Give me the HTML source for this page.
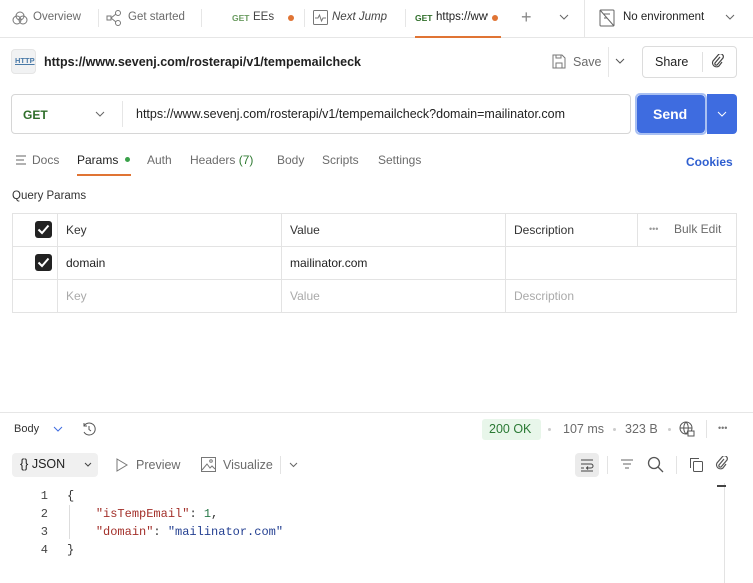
<!DOCTYPE html>
<html><head><meta charset="utf-8"><style>
*{margin:0;padding:0;box-sizing:border-box}
body{width:753px;height:583px;background:#fff;font-family:"Liberation Sans",sans-serif;font-size:12px;color:#212121;position:relative;overflow:hidden}
.a{position:absolute;white-space:nowrap}
.g{color:#6b6b6b}
.mono{font-family:"Liberation Mono",monospace;font-size:12px}
svg{position:absolute}
</style></head><body>
<!-- tab bar -->
<div class="a" style="left:0;top:37px;width:753px;height:1px;background:#e6e6e6"></div>
<svg style="left:12px;top:11px" width="16" height="14" viewBox="0 0 16 14" fill="none" stroke="#777"><circle cx="5" cy="9" r="4"/><circle cx="11" cy="9" r="4"/><circle cx="8" cy="5" r="4"/></svg>
<div class="a g" style="left:33px;top:11px;font-size:11.5px">Overview</div>
<div class="a" style="left:98px;top:9px;width:1px;height:18px;background:#e6e6e6"></div>
<svg style="left:106px;top:10px" width="16" height="16" viewBox="0 0 16 16" fill="none" stroke="#777"><rect x="1" y="6" width="4" height="4"/><circle cx="12" cy="3" r="2.5"/><circle cx="12" cy="13" r="2.5"/><path d="M5 8L10 4M5 8L10 12"/></svg>
<div class="a g" style="left:128px;top:11px;font-size:11.5px">Get started</div>
<div class="a" style="left:201px;top:9px;width:1px;height:18px;background:#e6e6e6"></div>
<div class="a" style="left:232px;top:13px;font-size:8.5px;color:#6a9b60;font-weight:bold">GET</div>
<div class="a" style="left:253px;top:11px;font-size:11.5px;color:#444">EEs</div>
<div class="a" style="left:288px;top:15px;width:6px;height:6px;border-radius:3px;background:#e07434"></div>
<div class="a" style="left:304px;top:9px;width:1px;height:18px;background:#e6e6e6"></div>
<svg style="left:313px;top:10px" width="15" height="15" viewBox="0 0 15 15" fill="none" stroke="#777"><rect x="0.5" y="0.5" width="14" height="14" rx="1"/><path d="M2 8h3l1.5-3 2 6 1.5-3h3"/></svg>
<div class="a" style="left:332px;top:11px;font-size:11.5px;font-style:italic;color:#444">Next Jump</div>
<div class="a" style="left:405px;top:9px;width:1px;height:18px;background:#e6e6e6"></div>
<div class="a" style="left:415px;top:13px;font-size:8.5px;color:#2f6e2a;font-weight:bold">GET</div>
<div class="a" style="left:436px;top:11px;font-size:11.5px;color:#222;width:52px;overflow:hidden">https://www</div>
<div class="a" style="left:492px;top:15px;width:6px;height:6px;border-radius:3px;background:#e07434"></div>
<div class="a" style="left:415px;top:36px;width:86px;height:2px;background:#e07434"></div>
<div class="a" style="left:521px;top:7px;font-size:18px;color:#888;font-weight:300">+</div>
<svg style="left:559px;top:14px" width="10" height="7" viewBox="0 0 10 7" fill="none" stroke="#666"><path d="M1 1l4 4 4-4"/></svg>
<div class="a" style="left:584px;top:0;width:1px;height:37px;background:#e6e6e6"></div>
<svg style="left:599px;top:9px" width="16" height="18" viewBox="0 0 16 18" fill="none" stroke="#666"><rect x="1" y="1" width="14" height="16" rx="1"/><path d="M1 1l14 16M5 5h6M5 9h3"/></svg>
<div class="a" style="left:623px;top:11px;font-size:11.5px;color:#222">No environment</div>
<svg style="left:725px;top:14px" width="10" height="7" viewBox="0 0 10 7" fill="none" stroke="#666"><path d="M1 1l4 4 4-4"/></svg>

<!-- title row -->
<div class="a" style="left:11px;top:49px;width:25px;height:25px;border-radius:4px;background:#f1f2f3;border:1px solid #e5e5e5"></div>
<div class="a" style="left:15px;top:56px;font-size:7.5px;color:#4a7aa8;font-weight:bold;text-decoration:underline">HTTP</div>
<div class="a" style="left:44px;top:55px;font-size:12.5px;font-weight:bold;color:#212121">https://www.sevenj.com/rosterapi/v1/tempemailcheck</div>
<svg style="left:552px;top:54px" width="14" height="15" viewBox="0 0 14 15" fill="none" stroke="#777"><path d="M1 1h9l3 3v10H1z"/><rect x="4" y="9" width="6" height="5"/><path d="M4 1v3h5V1"/></svg>
<div class="a g" style="left:573px;top:55px;font-size:12.5px">Save</div>
<div class="a" style="left:608px;top:47px;width:1px;height:30px;background:#e6e6e6"></div>
<svg style="left:615px;top:58px" width="10" height="7" viewBox="0 0 10 7" fill="none" stroke="#555"><path d="M1 1l4 4 4-4"/></svg>
<div class="a" style="left:642px;top:46px;width:95px;height:32px;border:1px solid #dcdcdc;border-radius:4px"></div>
<div class="a" style="left:655px;top:55px;font-size:12.5px;color:#222">Share</div>
<div class="a" style="left:702px;top:52px;width:1px;height:20px;background:#e0e0e0"></div>
<svg style="left:711px;top:54px" width="14" height="15" viewBox="0 0 14 15" fill="none" stroke="#444" stroke-width="1.2"><path d="M9 3l-5 6a1.5 1.5 0 0 0 2 2l6-7a3 3 0 0 0-4-4l-6 7a4 4 0 0 0 6 5l3-4"/></svg>

<!-- url bar -->
<div class="a" style="left:11px;top:94px;width:620px;height:40px;border:1px solid #d6d6d6;border-radius:4px"></div>
<div class="a" style="left:23px;top:108px;font-size:12px;font-weight:bold;color:#2f6e2a">GET</div>
<svg style="left:95px;top:111px" width="10" height="7" viewBox="0 0 10 7" fill="none" stroke="#666"><path d="M1 1l4 4 4-4"/></svg>
<div class="a" style="left:122px;top:101px;width:1px;height:26px;background:#e6e6e6"></div>
<div class="a" style="left:136px;top:107px;font-size:12.5px;color:#222">https://www.sevenj.com/rosterapi/v1/tempemailcheck?domain=mailinator.com</div>
<div class="a" style="left:635px;top:93px;width:72px;height:42px;border:2px solid #a9c0f2;border-radius:5px"></div>
<div class="a" style="left:637px;top:95px;width:68px;height:38px;background:#3e6ce0;border-radius:4px"></div>
<div class="a" style="left:653px;top:106px;font-size:14px;font-weight:bold;color:#fff">Send</div>
<div class="a" style="left:707px;top:94px;width:30px;height:40px;background:#3e6ce0;border-radius:0 4px 4px 0"></div>
<svg style="left:717px;top:111px" width="10" height="7" viewBox="0 0 10 7" fill="none" stroke="#fff"><path d="M1 1l4 4 4-4"/></svg>

<!-- request tabs -->
<svg style="left:16px;top:155px" width="11" height="10" viewBox="0 0 11 10" stroke="#666"><path d="M0 1h10M0 5h8M0 9h10"/></svg>
<div class="a g" style="left:32px;top:153px;font-size:12px">Docs</div>
<div class="a" style="left:77px;top:153px;font-size:12px;color:#222">Params</div>
<div class="a" style="left:125px;top:157px;width:5px;height:5px;border-radius:3px;background:#3aa14a"></div>
<div class="a" style="left:77px;top:174px;width:54px;height:2px;background:#e07434"></div>
<div class="a g" style="left:147px;top:153px;font-size:12px">Auth</div>
<div class="a g" style="left:190px;top:153px;font-size:12px">Headers <span style="color:#2f7a32">(7)</span></div>
<div class="a g" style="left:277px;top:153px;font-size:12px">Body</div>
<div class="a g" style="left:322px;top:153px;font-size:12px">Scripts</div>
<div class="a g" style="left:378px;top:153px;font-size:12px">Settings</div>
<div class="a" style="left:686px;top:155px;font-size:12px;font-weight:bold;color:#2f5fd0">Cookies</div>

<div class="a" style="left:12px;top:190px;font-size:11.5px;color:#333">Query Params</div>

<!-- table -->
<div class="a" style="left:12px;top:213px;width:725px;height:100px;border:1px solid #e3e3e3"></div>
<div class="a" style="left:12px;top:246px;width:725px;height:1px;background:#e3e3e3"></div>
<div class="a" style="left:12px;top:279px;width:725px;height:1px;background:#e3e3e3"></div>
<div class="a" style="left:57px;top:213px;width:1px;height:100px;background:#e3e3e3"></div>
<div class="a" style="left:281px;top:213px;width:1px;height:100px;background:#e3e3e3"></div>
<div class="a" style="left:505px;top:213px;width:1px;height:100px;background:#e3e3e3"></div>
<div class="a" style="left:637px;top:213px;width:1px;height:33px;background:#e3e3e3"></div>
<div class="a" style="left:35px;top:221px;width:17px;height:17px;background:#222;border-radius:3px"></div>
<svg style="left:37px;top:224px" width="13" height="11" viewBox="0 0 13 11" fill="none" stroke="#fff" stroke-width="2"><path d="M1.5 5.5l3.5 3.5 6.5-7.5"/></svg>
<div class="a" style="left:35px;top:254px;width:17px;height:17px;background:#222;border-radius:3px"></div>
<svg style="left:37px;top:257px" width="13" height="11" viewBox="0 0 13 11" fill="none" stroke="#fff" stroke-width="2"><path d="M1.5 5.5l3.5 3.5 6.5-7.5"/></svg>
<div class="a" style="left:66px;top:223px;font-size:12px;color:#333">Key</div>
<div class="a" style="left:290px;top:223px;font-size:12px;color:#333">Value</div>
<div class="a" style="left:514px;top:223px;font-size:12px;color:#333">Description</div>
<div class="a" style="left:649px;top:224px;font-size:9px;color:#999">•••</div>
<div class="a g" style="left:674px;top:222px;font-size:12px">Bulk Edit</div>
<div class="a" style="left:66px;top:256px;font-size:12px;color:#222">domain</div>
<div class="a" style="left:290px;top:256px;font-size:12px;color:#222">mailinator.com</div>
<div class="a" style="left:66px;top:289px;font-size:12px;color:#aaa">Key</div>
<div class="a" style="left:290px;top:289px;font-size:12px;color:#aaa">Value</div>
<div class="a" style="left:514px;top:289px;font-size:12px;color:#aaa">Description</div>

<!-- response -->
<div class="a" style="left:0;top:412px;width:753px;height:1px;background:#e6e6e6"></div>
<div class="a" style="left:14px;top:423px;font-size:11px;color:#333">Body</div>
<svg style="left:53px;top:426px" width="10" height="7" viewBox="0 0 10 7" fill="none" stroke="#3e6ce0"><path d="M1 1l4 4 4-4"/></svg>
<svg style="left:81px;top:421px" width="16" height="16" viewBox="0 0 16 16" fill="none" stroke="#555"><path d="M3 5A6 6 0 1 1 3 11M3 2v3h3M8 5v3.5l2 1.5"/></svg>
<div class="a" style="left:482px;top:419px;width:59px;height:21px;background:#e8f6ea;border-radius:3px"></div>
<div class="a" style="left:489px;top:422px;font-size:12.5px;color:#2b7a35">200 OK</div>
<div class="a" style="left:548px;top:428px;width:3px;height:3px;border-radius:2px;background:#ccc"></div>
<div class="a g" style="left:563px;top:422px;font-size:12.5px">107 ms</div>
<div class="a" style="left:613px;top:428px;width:3px;height:3px;border-radius:2px;background:#ccc"></div>
<div class="a g" style="left:625px;top:422px;font-size:12.5px">323 B</div>
<div class="a" style="left:668px;top:428px;width:3px;height:3px;border-radius:2px;background:#ccc"></div>
<svg style="left:679px;top:421px" width="16" height="16" viewBox="0 0 16 16" fill="none" stroke="#555"><circle cx="7" cy="7" r="6"/><path d="M1 7h12M7 1c-3 3-3 9 0 12M7 1c3 3 3 9 0 12"/><rect x="9" y="10" width="6" height="5" fill="#fff"/></svg>
<div class="a" style="left:706px;top:420px;width:1px;height:18px;background:#e3e3e3"></div>
<div class="a" style="left:718px;top:423px;font-size:9px;color:#777">•••</div>

<div class="a" style="left:12px;top:453px;width:86px;height:24px;background:#f0f0f0;border-radius:4px"></div>
<div class="a" style="left:20px;top:457px;font-size:12.5px;color:#222">{} JSON</div>
<svg style="left:84px;top:462px" width="8" height="6" viewBox="0 0 8 6" fill="none" stroke="#444"><path d="M1 1l3 3 3-3"/></svg>
<svg style="left:116px;top:458px" width="12" height="14" viewBox="0 0 12 14" fill="none" stroke="#777"><path d="M1 1l10 6-10 6z"/></svg>
<div class="a g" style="left:136px;top:458px;font-size:12.5px">Preview</div>
<svg style="left:201px;top:457px" width="15" height="15" viewBox="0 0 15 15" fill="none" stroke="#777"><rect x="0.5" y="0.5" width="14" height="14"/><path d="M1 13l5-6 3 4 2-2 3 3"/><circle cx="10" cy="4" r="1.3"/></svg>
<div class="a g" style="left:223px;top:458px;font-size:12.5px">Visualize</div>
<div class="a" style="left:280px;top:456px;width:1px;height:18px;background:#e3e3e3"></div>
<svg style="left:289px;top:462px" width="9" height="6" viewBox="0 0 9 6" fill="none" stroke="#666"><path d="M1 1l3.5 3.5 3.5-3.5"/></svg>
<div class="a" style="left:575px;top:453px;width:24px;height:24px;background:#ebebeb;border-radius:4px"></div>
<svg style="left:580px;top:458px" width="14" height="14" viewBox="0 0 14 14" fill="none" stroke="#444"><path d="M1 2h12M1 6h10a2 2 0 0 1 0 4H7M8 8.5L6.5 10 8 11.5M1 10h3M1 13h12"/></svg>
<div class="a" style="left:607px;top:456px;width:1px;height:18px;background:#e3e3e3"></div>
<svg style="left:620px;top:459px" width="14" height="12" viewBox="0 0 14 12" stroke="#666"><path d="M1 1h12M3 5h8M5 9h4"/></svg>
<svg style="left:647px;top:456px" width="17" height="17" viewBox="0 0 17 17" fill="none" stroke="#555" stroke-width="1.3"><circle cx="7" cy="7" r="5.5"/><path d="M11 11l5 5"/></svg>
<div class="a" style="left:676px;top:456px;width:1px;height:18px;background:#e3e3e3"></div>
<svg style="left:689px;top:457px" width="15" height="16" viewBox="0 0 15 16" fill="none" stroke="#555"><rect x="4.5" y="4.5" width="9" height="10" rx="1"/><path d="M1.5 11V1.5H10"/></svg>
<svg style="left:715px;top:456px" width="14" height="15" viewBox="0 0 14 15" fill="none" stroke="#555" stroke-width="1.2"><path d="M9 3l-5 6a1.5 1.5 0 0 0 2 2l6-7a3 3 0 0 0-4-4l-6 7a4 4 0 0 0 6 5l3-4"/></svg>

<!-- code -->
<div class="a" style="left:724px;top:483px;width:1px;height:100px;background:#e3e3e3"></div>
<div class="a" style="left:717px;top:485px;width:9px;height:2px;background:#444"></div>
<div class="a" style="left:69px;top:505px;width:1px;height:34px;background:#ddd"></div>
<div class="a mono" style="left:38px;top:487px;line-height:18px;color:#444;text-align:right;width:10px">1<br>2<br>3<br>4</div>
<div class="a mono" style="left:67px;top:487px;line-height:18px;color:#333">{<br>&nbsp;&nbsp;&nbsp;&nbsp;<span style="color:#a3302a">"isTempEmail"</span>: <span style="color:#2a7a4a">1</span>,<br>&nbsp;&nbsp;&nbsp;&nbsp;<span style="color:#a3302a">"domain"</span>: <span style="color:#233f91">"mailinator.com"</span><br>}</div>
</body></html>
